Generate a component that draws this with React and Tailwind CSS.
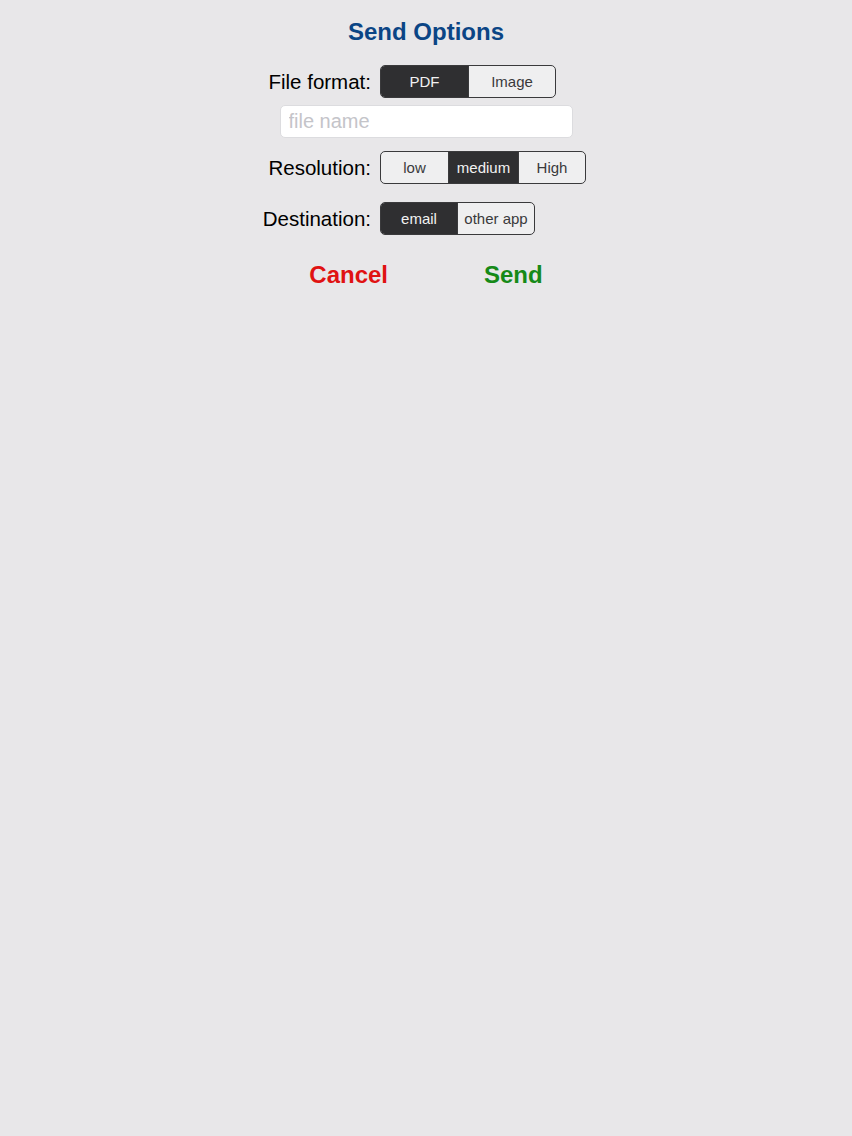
import { useState } from 'react';

const FONT = { fontFamily: '"Liberation Sans", Arial, Helvetica, sans-serif' };

export default function App() {
  const [format, setFormat] = useState('PDF');
  const [resolution, setResolution] = useState('medium');
  const [destination, setDestination] = useState('email');
  const [fileName, setFileName] = useState('');

  return (
    <div className="min-h-[1136px] w-full bg-[#e8e7e9] text-black" style={FONT}>
      <h1 className="pt-[18px] text-center text-[24px] font-bold leading-[28px] text-[#0b4585]">
        Send Options
      </h1>

      <div className="mt-[19px] flex flex-col">
        <Row label="File format:">
          <Segmented
            options={[
              { value: 'PDF', width: 'w-[87px]' },
              { value: 'Image', width: 'w-[87px]' },
            ]}
            value={format}
            onChange={setFormat}
          />
        </Row>

        <div className="mt-[7px] flex justify-center">
          <input
            value={fileName}
            onChange={(e) => setFileName(e.target.value)}
            placeholder="file name"
            className="h-[33px] w-[293px] rounded-[5px] border border-[#dcdcdf] bg-white px-[8px] text-[20px] text-black outline-none placeholder:text-[#c4c4c9]"
            style={FONT}
          />
        </div>

        <div className="mt-[13px]">
          <Row label="Resolution:">
            <Segmented
              options={[
                { value: 'low', width: 'w-[67px]' },
                { value: 'medium', width: 'w-[70px]' },
                { value: 'High', width: 'w-[67px]' },
              ]}
              value={resolution}
              onChange={setResolution}
            />
          </Row>
        </div>

        <div className="mt-[18px]">
          <Row label="Destination:">
            <Segmented
              options={[
                { value: 'email', width: 'w-[76px]' },
                { value: 'other app', width: 'w-[77px]' },
              ]}
              value={destination}
              onChange={setDestination}
            />
          </Row>
        </div>

        <div className="mt-[26px] flex">
          <div className="flex w-[426px] justify-end pr-[38px]">
            <button type="button" className="text-[24px] font-bold leading-[28px] text-[#e01212]">
              Cancel
            </button>
          </div>
          <div className="flex pl-[58px]">
            <button type="button" className="text-[24px] font-bold leading-[28px] text-[#168a18]">
              Send
            </button>
          </div>
        </div>
      </div>
    </div>
  );
}

function Row({ label, children }) {
  return (
    <div className="flex items-center">
      <span className="w-[380px] pr-[9px] text-right text-[20.5px] leading-[28px]">{label}</span>
      {children}
    </div>
  );
}

function Segmented({ options, value, onChange }) {
  return (
    <div className="flex h-[33px] overflow-hidden rounded-[5px] border border-[#3a3a3c] bg-[#efeff0]">
      {options.map((opt, i) => {
        const active = opt.value === value;
        return (
          <button
            key={opt.value}
            type="button"
            onClick={() => onChange(opt.value)}
            className={
              opt.width +
              ' flex items-center justify-center text-[15px] leading-none ' +
              (active ? 'bg-[#2f2f31] text-[#f2f2f2]' : 'text-[#3a3a3c]') +
              (i > 0 ? ' border-l border-[#3a3a3c]' : '')
            }
          >
            {opt.value}
          </button>
        );
      })}
    </div>
  );
}
